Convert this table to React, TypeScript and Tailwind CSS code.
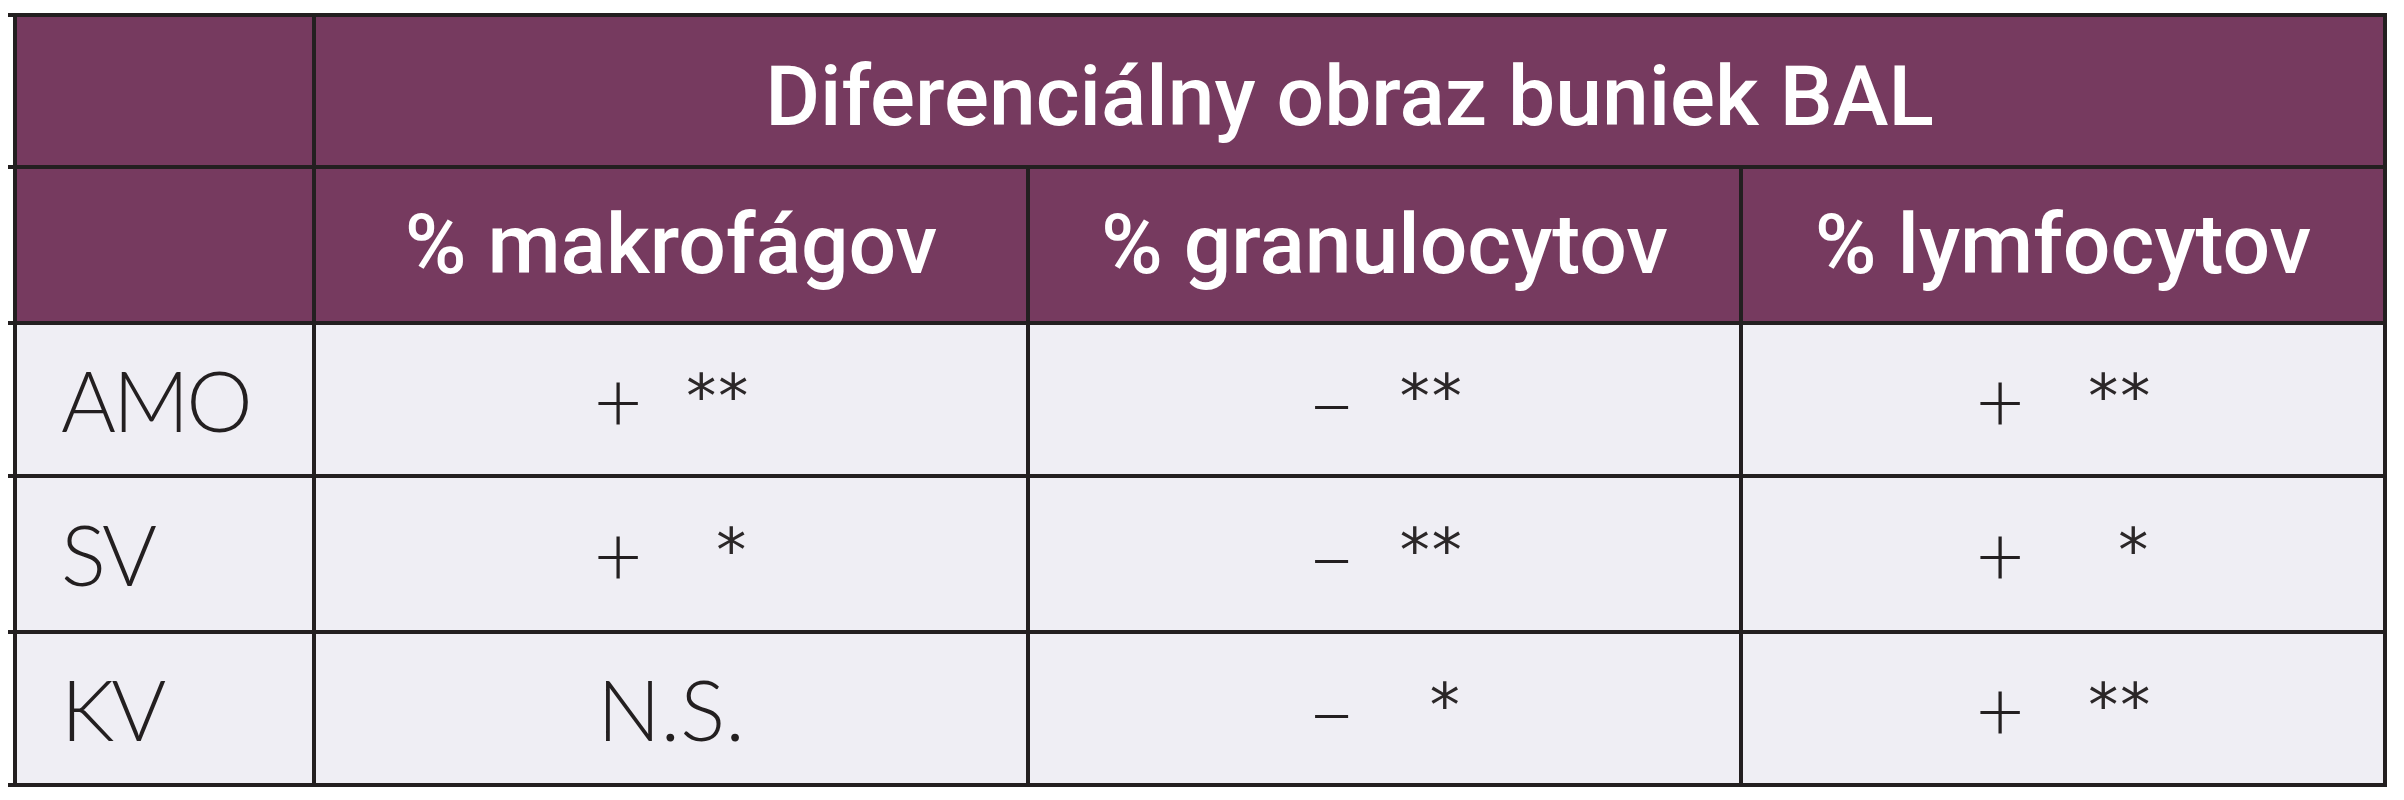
const head = "flex items-center justify-center bg-[#763a5f] text-white font-['Roboto',sans-serif] font-medium text-[84px] leading-none";
const cell = "flex items-center justify-center bg-[#efeef4] text-[#231f20] font-['Lato',sans-serif] font-light text-[84px] leading-none";
const label = "flex items-center bg-[#efeef4] text-[#231f20] font-['Lato',sans-serif] font-light text-[84px] leading-none tracking-[-3px] pl-[44px]";

const Mark = ({ sign, stars, gap }: { sign: string; stars: string; gap: string }) => (
  <div className={"flex items-center " + gap}>
    <span>{sign}</span>
    <span className="w-[62px] self-start mt-[8px] text-right font-['DejaVu_Sans',sans-serif] font-normal text-[60px] leading-none tracking-[2px] text-[#2b2728]">
      {stars}
    </span>
  </div>
);

export default function App() {
  return (
    <div className="flex min-h-[800px] bg-white pl-[8px] pt-[13px]">
      {/* little ticks where the rules run past the left edge */}
      <div className="grid w-[5px] grid-rows-[4px_148px_4px_152px_4px_149px_4px_152px_4px_149px_4px] h-fit">
        <div className="bg-[#231f20]" />
        <div />
        <div className="bg-[#231f20]" />
        <div />
        <div className="bg-[#231f20]" />
        <div />
        <div className="bg-[#231f20]" />
        <div />
        <div className="bg-[#231f20]" />
        <div />
        <div className="bg-[#231f20]" />
      </div>
      <div className="grid h-fit w-fit grid-cols-[295px_710px_709px_640px] grid-rows-[148px_152px_149px_152px_149px] gap-[4px] bg-[#231f20] p-[4px]">
        <div className="bg-[#763a5f]" />
        <div className={head + " col-span-3 pt-[12px]"}>Diferenciálny obraz buniek BAL</div>

        <div className="bg-[#763a5f]" />
        <div className={head}>% makrofágov</div>
        <div className={head}>% granulocytov</div>
        <div className={head}>% lymfocytov</div>

        <div className={label}>AMO</div>
        <div className={cell}><Mark sign="+" stars="**" gap="gap-[44px]" /></div>
        <div className={cell}><Mark sign="–" stars="**" gap="gap-[44px]" /></div>
        <div className={cell}><Mark sign="+" stars="**" gap="gap-[64px]" /></div>

        <div className={label}>SV</div>
        <div className={cell}><Mark sign="+" stars="*" gap="gap-[44px]" /></div>
        <div className={cell}><Mark sign="–" stars="**" gap="gap-[44px]" /></div>
        <div className={cell}><Mark sign="+" stars="*" gap="gap-[64px]" /></div>

        <div className={label}>KV</div>
        <div className={cell}>N.S.</div>
        <div className={cell}><Mark sign="–" stars="*" gap="gap-[44px]" /></div>
        <div className={cell}><Mark sign="+" stars="**" gap="gap-[64px]" /></div>
      </div>
    </div>
  );
}
